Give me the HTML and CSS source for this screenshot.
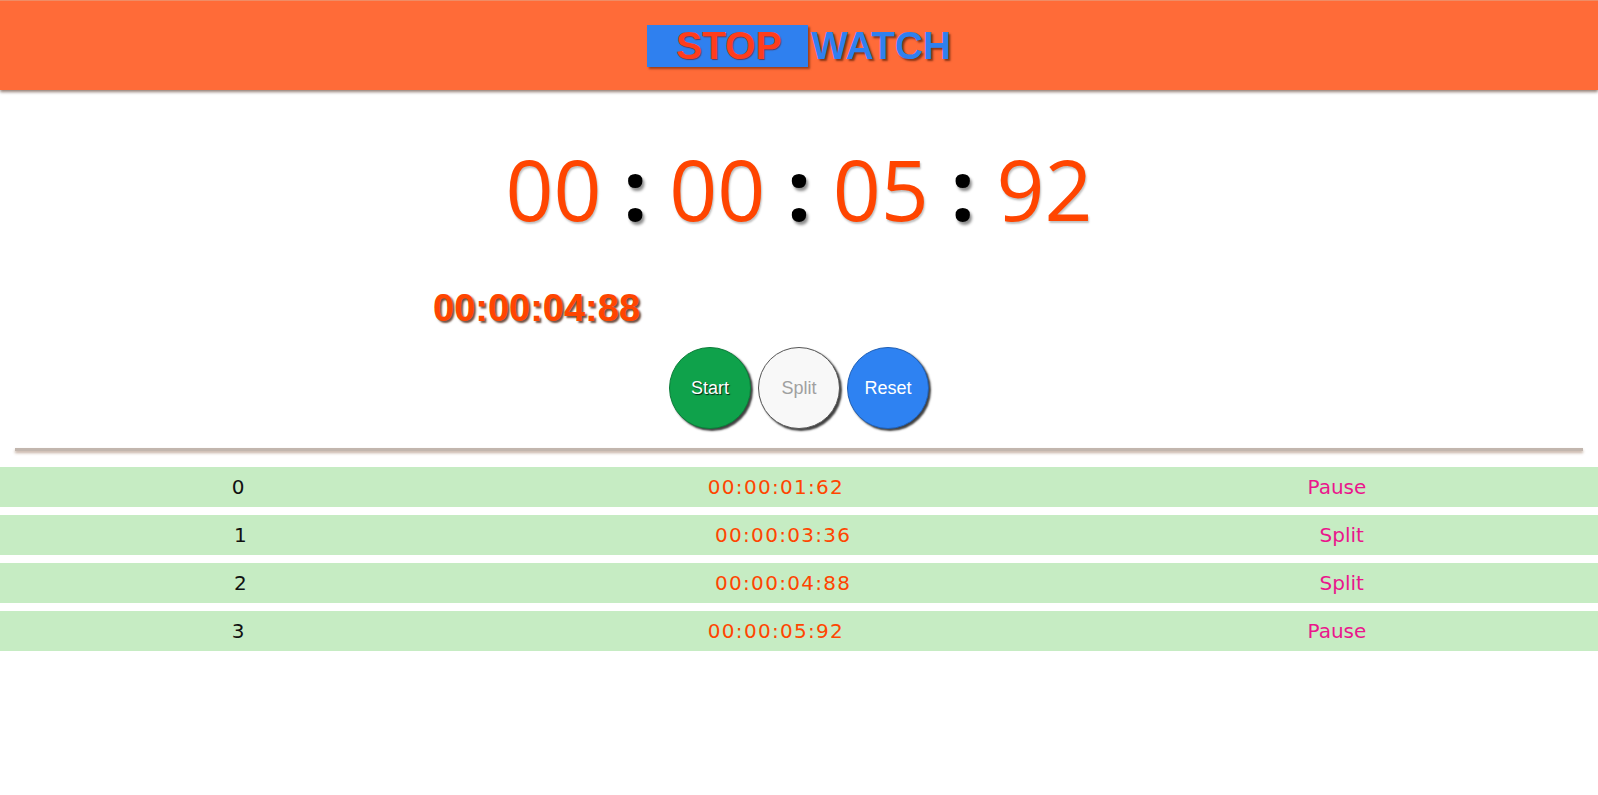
FILE: index.html
```html
<!DOCTYPE html>
<html lang="en">
<head>
<meta charset="utf-8">
<title>Stop Watch</title>
<link rel="stylesheet" href="styles.css">
</head>
<body>
<header class="topbar">
  <h1 class="title"><span class="title-stop">STOP</span><span class="title-watch">WATCH</span></h1>
</header>
<main class="watch">
  <div class="clock"><span class="num">00</span><span class="sep"> : </span><span class="num">00</span><span class="sep"> : </span><span class="num">05</span><span class="sep"> : </span><span class="num">92</span></div>
  <div class="split-time">00:00:04:88</div>
  <div class="controls">
    <button class="btn btn-start">Start</button>
    <button class="btn btn-split">Split</button>
    <button class="btn btn-reset">Reset</button>
  </div>
</main>
<hr class="divider">
<ul class="laps">
  <li class="lap"><span class="lap-no">0</span><span class="lap-time">00:00:01:62</span><span class="lap-type">Pause</span></li>
  <li class="lap"><span class="lap-no">1</span><span class="lap-time">00:00:03:36</span><span class="lap-type">Split</span></li>
  <li class="lap"><span class="lap-no">2</span><span class="lap-time">00:00:04:88</span><span class="lap-type">Split</span></li>
  <li class="lap"><span class="lap-no">3</span><span class="lap-time">00:00:05:92</span><span class="lap-type">Pause</span></li>
</ul>
</body>
</html>
```
FILE: styles.css
```css
* { box-sizing: border-box; }

body {
  margin: 0;
  background: #ffffff;
  font-family: "Liberation Sans", Arial, sans-serif;
}

.topbar {
  height: 90px;
  background: #ff6b38;
  border-top: 1px solid #ef8c66;
  box-shadow: 0 2px 3px rgba(60, 20, 0, 0.55);
  display: flex;
  justify-content: center;
  align-items: center;
}

.title {
  margin: 0;
  display: flex;
  align-items: center;
  font-family: "Liberation Sans", Arial, sans-serif;
  font-weight: bold;
  font-size: 39px;
  line-height: 42px;
}

.title-stop {
  display: block;
  background: #2f80ef;
  color: #ff3d1c;
  width: 161px;
  height: 42px;
  padding-left: 29px;
  box-shadow: 2px 2px 2px rgba(80, 30, 0, 0.55);
  text-shadow: 1px 1px 1px rgba(120, 20, 0, 0.6);
}

.title-watch {
  color: #2f80ef;
  margin-left: 3px;
  text-shadow: 2px 2px 2px rgba(60, 20, 0, 0.6);
}

.clock {
  margin-top: 44px;
  text-align: center;
  font-family: "Open Sans", sans-serif;
  font-size: 84px;
  line-height: 109px;
  color: #ff4500;
  white-space: nowrap;
}

.num {
  text-shadow: 1px 2px 2px rgba(0, 0, 0, 0.25);
}

.sep {
  color: #000000;
  font-weight: bold;
  text-shadow: 2px 3px 3px rgba(0, 0, 0, 0.45);
}

.split-time {
  margin-top: 45px;
  margin-left: 433px;
  font-family: "Liberation Sans", Arial, sans-serif;
  font-weight: bold;
  font-size: 38px;
  line-height: 41px;
  color: #ff4500;
  text-shadow: 2px 2px 2px rgba(60, 20, 0, 0.75);
}

.controls {
  margin-top: 18px;
  display: flex;
  justify-content: center;
  gap: 7px;
}

.btn {
  width: 82px;
  height: 82px;
  border-radius: 50%;
  border: 1px solid #333;
  font-family: "Liberation Sans", Arial, sans-serif;
  font-size: 18px;
  padding: 0;
  box-shadow: 2px 2px 2px rgba(0, 0, 0, 0.75);
  cursor: pointer;
}

.btn-start {
  background: #0fa24b;
  color: #ffffff;
  border-color: #0b7d39;
  text-shadow: 1px 1px 1px rgba(0, 0, 0, 0.8);
}

.btn-split {
  background: #f8f8f8;
  color: #a0a0a0;
  border-color: #555;
}

.btn-reset {
  background: #2e82f2;
  color: #ffffff;
  border-color: #1f5fb5;
}

.divider {
  margin: 19px 15px 0;
  height: 3px;
  border: none;
  background: #c2b6ae;
  box-shadow: 0 2px 3px rgba(120, 70, 40, 0.45);
}

.laps {
  list-style: none;
  margin: 16px 0 0;
  padding: 0;
  display: flex;
  flex-direction: column;
  gap: 8px;
}

.lap {
  height: 40px;
  background: #c6ecc3;
  display: flex;
  align-items: center;
  justify-content: space-around;
  font-family: "DejaVu Sans", Verdana, sans-serif;
  font-size: 20px;
}

.lap-no {
  color: #111111;
}

.lap-time {
  color: #ff4500;
  letter-spacing: 1.3px;
}

.lap-type {
  color: #ea168c;
}
```
